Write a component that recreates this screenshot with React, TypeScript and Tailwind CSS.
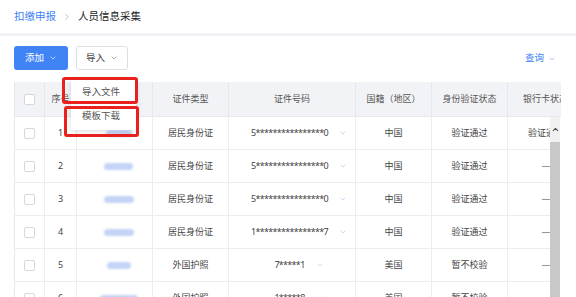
import { ChevronDown, ChevronRight, ChevronUp } from "lucide-react";

type Row = {
  no: number;
  blob: number;
  type: string;
  id: string;
  country: string;
  status: string;
  bank: string;
};

const rows: Row[] = [
  { no: 1, blob: 26, type: "居民身份证", id: "5****************0", country: "中国", status: "验证通过", bank: "验证通过" },
  { no: 2, blob: 29, type: "居民身份证", id: "5****************0", country: "中国", status: "验证通过", bank: "—" },
  { no: 3, blob: 30, type: "居民身份证", id: "5****************0", country: "中国", status: "验证通过", bank: "—" },
  { no: 4, blob: 30, type: "居民身份证", id: "1****************7", country: "中国", status: "验证通过", bank: "—" },
  { no: 5, blob: 24, type: "外国护照", id: "7*****1", country: "美国", status: "暂不校验", bank: "—" },
  { no: 6, blob: 38, type: "外国护照", id: "1*****8", country: "美国", status: "暂不校验", bank: "—" },
];

const cols = ["w-[30px]", "w-[32px]", "w-[76px]", "w-[76px]", "w-[127px]", "w-[76px]", "w-[76px]", "w-[76px]"];

function Checkbox() {
  return <span className="block w-[11px] h-[11px] rounded-[2px] border border-[#d4d7de] bg-white" />;
}

export default function App() {
  return (
    <div
      className="w-[576px] h-[297px] overflow-hidden bg-white text-[#333]"
      style={{ fontFamily: '"Noto Sans", "Noto Sans CJK SC", sans-serif' }}
    >
      {/* Breadcrumb */}
      <div className="h-[33px] flex items-center px-[14px] text-[10.5px]">
        <span className="text-[#3d7ff5]">扣缴申报</span>
        <ChevronRight size={10} className="mx-[6px] text-[#999]" strokeWidth={1.5} />
        <span className="text-[#222]">人员信息采集</span>
      </div>
      <div className="h-[3px] bg-[#f1f2f5]" />

      <div className="pl-[14px] pt-[10px]">
        {/* Toolbar */}
        <div className="flex items-center justify-between pr-[20px] h-[24px]">
          <div className="flex items-center gap-[8px]">
            <button className="h-[24px] w-[54px] rounded-[3px] bg-[#3f83f4] text-white text-[9.5px] flex items-center justify-center gap-[5px]">
              添加
              <ChevronDown size={8} strokeWidth={2} />
            </button>
            <button className="h-[24px] w-[52px] rounded-[3px] border border-[#dcdfe6] bg-white text-[#444] text-[9.5px] flex items-center justify-center gap-[5px]">
              导入
              <ChevronDown size={8} strokeWidth={2} className="text-[#888]" />
            </button>
          </div>
          <div className="flex items-center gap-[4px] text-[#3d7ff5] text-[9.5px] pt-[1px]">
            查询
            <ChevronDown size={8} strokeWidth={2} className="text-[#8aa8e8]" />
          </div>
        </div>

        {/* Table */}
        <div className="relative mt-[12px] w-[546px] border-l border-[#e6e8ee]">
          <div className="w-[546px] overflow-hidden">
            <div className="flex h-[35px] bg-[#f2f3f6] text-[9px] text-[#555] border-b border-[#e6e8ee]">
              {["", "序号", "", "证件类型", "证件号码", "国籍（地区）", "身份验证状态", "银行卡状态"].map((h, i) => (
                <div
                  key={i}
                  className={`${cols[i]} shrink-0 flex items-center justify-center border-r border-[#e6e8ee] whitespace-nowrap`}
                >
                  {i === 0 ? <Checkbox /> : h}
                </div>
              ))}
            </div>
          </div>

          <div className="flex">
            <div className="w-[536px] overflow-hidden">
              {rows.map((r) => (
                <div key={r.no} className="flex h-[33px] text-[9px] text-[#444] border-b border-[#ebedf2]">
                  <div className={`${cols[0]} shrink-0 flex items-center justify-center border-r border-[#ebedf2]`}>
                    <Checkbox />
                  </div>
                  <div className={`${cols[1]} shrink-0 flex items-center justify-center border-r border-[#ebedf2]`}>
                    {r.no}
                  </div>
                  <div className={`${cols[2]} shrink-0 flex items-center justify-center border-r border-[#ebedf2]`}>
                    <span
                      className="block h-[7px] rounded-full bg-[#c4d4f6] blur-[1px] ml-[8px]"
                      style={{ width: r.blob }}
                    />
                  </div>
                  <div className={`${cols[3]} shrink-0 flex items-center justify-center border-r border-[#ebedf2]`}>
                    {r.type}
                  </div>
                  <div className={`${cols[4]} shrink-0 flex items-center justify-center gap-[11px] pl-[14px] border-r border-[#ebedf2]`}>
                    <span className="tracking-[-0.7px]">{r.id}</span>
                    <ChevronDown size={8} strokeWidth={1.5} className="text-[#8fb0ee]" />
                  </div>
                  <div className={`${cols[5]} shrink-0 flex items-center justify-center border-r border-[#ebedf2]`}>
                    {r.country}
                  </div>
                  <div className={`${cols[6]} shrink-0 flex items-center justify-center border-r border-[#ebedf2]`}>
                    {r.status}
                  </div>
                  <div className={`${cols[7]} shrink-0 flex items-center justify-center whitespace-nowrap`}>
                    {r.bank}
                  </div>
                </div>
              ))}
            </div>
            {/* Scrollbar */}
            <div className="w-[10px] shrink-0 bg-[#f1f1f1] flex flex-col items-center">
              <ChevronUp size={9} strokeWidth={3} className="text-[#505050] mt-[8px]" />
              <div className="w-[10px] flex-1 mt-[8px] bg-[#c8c8c8]" />
            </div>
          </div>

          {/* Import dropdown */}
          <div className="absolute left-[56px] top-[-2px] w-[65px] h-[50px] bg-white rounded-[2px] shadow-[0_1px_6px_rgba(0,0,0,0.15)] flex flex-col text-[9.5px] text-[#555]">
            <div className="h-[25px] flex items-center pl-[11px]">导入文件</div>
            <div className="h-[23px] flex items-center pl-[11px]">模板下载</div>
          </div>
          <div className="absolute left-[47px] top-[-5px] w-[76px] h-[27px] border-[3px] border-[#e8201e] rounded-[3px]" />
          <div className="absolute left-[49px] top-[24px] w-[75px] h-[31px] border-[3px] border-[#e8201e] rounded-[3px]" />
        </div>
      </div>
    </div>
  );
}
